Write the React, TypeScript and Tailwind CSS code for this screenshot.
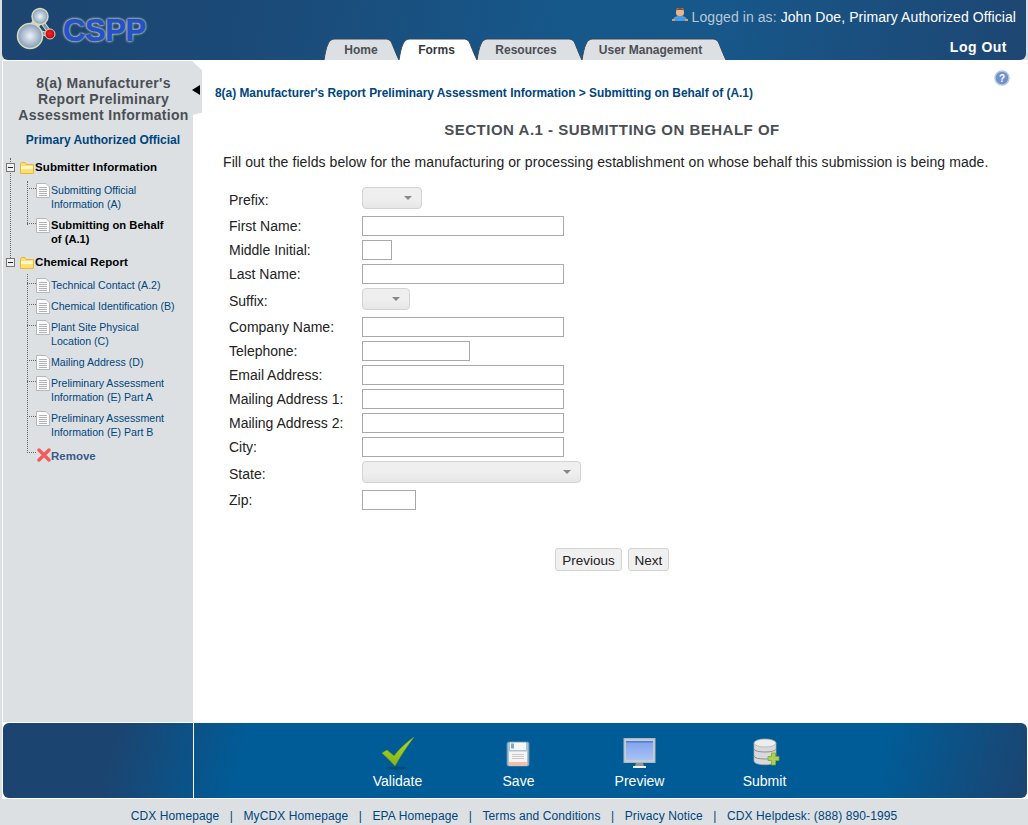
import React from "react";

const FONT = "font-['Liberation_Sans',Arial,sans-serif]";

function Tab({ w, label, active, pad }: { w: number; label: string; active?: boolean; pad: string }) {
  const d = `M0 22 C1 16 2 10 4 6 C6 2 8 1 12 1 L${w - 14} 1 C${w - 9} 1 ${w - 8} 3 ${w - 6} 8 C${w - 4} 13 ${w - 2} 18 ${w} 22`;
  return (
    <div className={`relative h-[22px] flex items-center justify-center ${pad}`} style={{ width: w }}>
      <svg className="absolute inset-0" width={w} height={22}>
        <path d={d} fill={active ? "#ffffff" : "#dce0e3"} stroke="#33465c" strokeWidth="1" />
      </svg>
      <span className={`relative text-[12px] font-bold pt-[1px] ${active ? "text-[#333a40]" : "text-[#4a4f55]"}`}>{label}</span>
    </div>
  );
}

function Logo() {
  return (
    <div className="flex items-center">
      <svg width="46" height="44" viewBox="0 0 46 44" className="shrink-0">
        <defs>
          <radialGradient id="ball" cx="50%" cy="50%" r="55%">
            <stop offset="0%" stopColor="#eef2f6" />
            <stop offset="65%" stopColor="#a3b5cb" />
            <stop offset="100%" stopColor="#7a90b0" />
          </radialGradient>
          <radialGradient id="red" cx="45%" cy="45%" r="55%">
            <stop offset="0%" stopColor="#f02828" />
            <stop offset="100%" stopColor="#c00010" />
          </radialGradient>
        </defs>
        <path d="M14 26 L24 10" stroke="#d8dcb8" strokeWidth="9" />
        <path d="M14 26 L24 10" stroke="#b9c8d8" strokeWidth="6.5" />
        <path d="M24 12 L34 26 M18 24 L34 28" stroke="#d8dcb8" strokeWidth="4.5" />
        <path d="M24 12 L34 26 M18 24 L34 28" stroke="#7d94b2" strokeWidth="2.5" />
        <circle cx="24" cy="9.5" r="8" fill="url(#ball)" stroke="#d8dcb8" strokeWidth="1.5" />
        <circle cx="14" cy="29" r="12.5" fill="url(#ball)" stroke="#d8dcb8" strokeWidth="1.5" />
        <circle cx="34" cy="27" r="5" fill="url(#red)" stroke="#d8dcb8" strokeWidth="1" />
      </svg>
      <span className="ml-[1px] mt-[3px] text-[31px] leading-none font-bold tracking-[-0.4px] text-[#2450c8] [-webkit-text-stroke:0.6px_#2450c8] [text-shadow:0_0_2px_#e2e2b4,0_0_2px_#e2e2b4,0_0_3px_#e2e2b4]">
        CSPP
      </span>
    </div>
  );
}

function Header() {
  return (
    <div className="relative mx-[2px] h-[60px] shrink-0 rounded-b-[6px] bg-[linear-gradient(100deg,#1d4570_0%,#1b4a78_25%,#16588a_55%,#17578a_70%,#1e4672_100%)] flex">
      <div className="pl-[14px] pt-[7px] w-[322px]">
        <Logo />
      </div>
      <div className="flex items-end">
        <Tab w={75} label="Home" pad="pr-[1px]" />
        <Tab w={78} label="Forms" active pad="pr-[3px]" />
        <Tab w={105} label="Resources" pad="pr-[7px]" />
        <Tab w={144} label="User Management" pad="pr-[7px]" />
      </div>
      <div className="absolute right-[10px] top-[8px] flex items-center text-[14px] leading-[18px] tracking-[0.08px]">
        <svg width="16" height="15" viewBox="0 0 16 15" className="mr-[4px] -mt-[5px]">
          <rect x="4" y="1" width="8" height="8" rx="3" fill="#e8b48c" />
          <path d="M4 4 C4 0 12 0 12 4 L11 3 L5 3 Z" fill="#8a4a20" />
          <path d="M1 13 C2 9 5 9 8 9 C11 9 14 9 15 13 L12 14 L4 14 Z" fill="#4a9ce8" />
          <rect x="0" y="12" width="3" height="2" fill="#e89850" />
          <rect x="13" y="12" width="3" height="2" fill="#e89850" />
        </svg>
        <span className="text-[#b9c7d6]">Logged in as:&nbsp;</span>
        <span className="text-white">John Doe, Primary Authorized Official</span>
      </div>
      <div className="absolute right-[19px] top-[38px] text-[14px] leading-[18px] font-bold text-white tracking-[0.5px]">Log Out</div>
    </div>
  );
}

function Folder() {
  return (
    <svg width="14" height="12" viewBox="0 0 14 12" className="shrink-0">
      <path d="M0.5 2 L0.5 11.5 L13.5 11.5 L13.5 2.5 L6 2.5 L5 0.5 L1.5 0.5 Z" fill="#ffdf70" stroke="#e8b830" />
      <rect x="1" y="4" width="12" height="3" fill="#fff6cc" />
    </svg>
  );
}

function Minus() {
  return (
    <svg width="10" height="10" viewBox="0 0 10 10" className="shrink-0">
      <rect x="0.5" y="0.5" width="8" height="8" fill="#eef0f2" stroke="#777" />
      <path d="M2 4.5 H7" stroke="#222" />
    </svg>
  );
}

function Doc() {
  return (
    <svg width="14" height="15" viewBox="0 0 14 15" className="shrink-0 -mb-[1px]">
      <path d="M0.5 0.5 H10 L13.5 4 V14.5 H0.5 Z" fill="#fbfbfb" stroke="#b5b8ba" />
      <path d="M3 4.5 H11 M3 6.5 H11 M3 8.5 H11 M3 10.5 H11 M3 12.5 H11" stroke="#b0b3b5" />
    </svg>
  );
}

function TreeHead({ label }: { label: string }) {
  return (
    <div className="relative flex items-center h-[14px] pl-[6px] text-[11.5px] font-bold text-black tracking-[0.1px]">
      <Minus />
      <span className="w-[4px]" />
      <Folder />
      <span className="ml-[1px] whitespace-nowrap">{label}</span>
    </div>
  );
}

function TreeItem({ lines, current, mb = 7 }: { lines: string[]; current?: boolean; mb?: number }) {
  return (
    <div className="relative flex pl-[36px]" style={{ marginBottom: mb }}>
      <span className="absolute left-[27px] top-[5px] w-[9px] border-t border-dotted border-[#666]" />
      <Doc />
      <div className={`ml-[1px] leading-[14px] whitespace-nowrap ${current ? "text-[11.2px] font-bold text-black" : "text-[10.6px] text-[#00457c]"}`}>
        {lines.map((l) => (
          <div key={l}>{l}</div>
        ))}
      </div>
    </div>
  );
}

function Sidebar() {
  return (
    <div className="relative z-10 w-[190px] ml-[1px] shrink-0 bg-[#dce0e3] border-t border-white">
      <div className="absolute left-[189px] top-0 h-[54px] w-[10px] bg-[#dce0e3] [clip-path:polygon(0_0,100%_17%,100%_96%,0_100%)]" />
      <div className="absolute left-[189px] top-[24px] w-0 h-0 border-y-[5px] border-y-transparent border-r-[8px] border-r-black" />
      <div className="pt-[14px] pl-[11px] text-center text-[14px] leading-[16px] font-bold text-[#4a4f55] tracking-[0.32px]">
        <div>8(a) Manufacturer's</div>
        <div>Report Preliminary</div>
        <div className="whitespace-nowrap">Assessment Information</div>
      </div>
      <div className="mt-[9px] pl-[10px] text-center text-[12px] leading-[16px] font-bold text-[#00457c] whitespace-nowrap">Primary Authorized Official</div>

      <div className="relative mt-[13px] -ml-[3px]">
        <span className="absolute left-[10px] top-[-3px] h-[100px] border-l border-dotted border-[#666]" />
        <span className="absolute left-[27px] top-[20px] h-[44px] border-l border-dotted border-[#666]" />
        <span className="absolute left-[27px] top-[113px] h-[179px] border-l border-dotted border-[#666]" />
        <TreeHead label="Submitter Information" />
        <div className="mt-[8px]">
          <TreeItem lines={["Submitting Official", "Information (A)"]} />
          <TreeItem current lines={["Submitting on Behalf", "of (A.1)"]} mb={10} />
        </div>
        <TreeHead label="Chemical Report" />
        <div className="mt-[8px]">
          <TreeItem lines={["Technical Contact (A.2)"]} />
          <TreeItem lines={["Chemical Identification (B)"]} />
          <TreeItem lines={["Plant Site Physical", "Location (C)"]} />
          <TreeItem lines={["Mailing Address (D)"]} />
          <TreeItem lines={["Preliminary Assessment", "Information (E) Part A"]} />
          <TreeItem lines={["Preliminary Assessment", "Information (E) Part B"]} mb={10} />
          <div className="relative flex items-center pl-[36px] h-[16px]">
            <span className="absolute left-[27px] top-[3px] w-[9px] border-t border-dotted border-[#666]" />
            <svg width="14" height="14" viewBox="0 0 14 14" className="shrink-0 -mt-[5px] ml-[1px]">
              <path d="M2 2 L12 12 M12 2 L2 12" stroke="#f25c5c" strokeWidth="3.4" strokeLinecap="round" />
            </svg>
            <span className="text-[11.5px] font-bold text-[#3a5a8c]">Remove</span>
          </div>
        </div>
      </div>
    </div>
  );
}

function Input({ w }: { w: number }) {
  return <div className="h-[20px] border border-[#a9a9a9] bg-white" style={{ width: w }} />;
}

function Select({ w }: { w: number }) {
  return (
    <div
      className="relative h-[22px] rounded-[4px] border border-[#d3d3d3] bg-[linear-gradient(#efefef,#efefef_50%,#e6e6e6)]"
      style={{ width: w }}
    >
      <span className="absolute right-[9px] top-[8px] w-0 h-0 border-x-[4px] border-x-transparent border-t-[4px] border-t-[#888]" />
    </div>
  );
}

function Row({ label, children, select }: { label: string; children: React.ReactNode; select?: boolean }) {
  return (
    <div className={`flex items-center ${select ? "mb-[7px]" : "mb-[4px]"}`}>
      <div className={`w-[133px] text-[14px] leading-[16px] text-[#222] whitespace-nowrap ${select ? "pt-[4px]" : ""}`}>{label}</div>
      {children}
    </div>
  );
}

function Button({ label, w }: { label: string; w: number }) {
  return (
    <div
      className="h-[23px] rounded-[3px] border border-[#d3d3d3] bg-[#f0f0f0] flex items-center justify-center pt-[3px] text-[13.5px] leading-[16px] text-[#222]"
      style={{ width: w }}
    >
      {label}
    </div>
  );
}

function Content() {
  return (
    <div className="relative flex-1 bg-white">
      <svg width="16" height="16" viewBox="0 0 16 16" className="absolute left-[801px] top-[10px]">
        <circle cx="8" cy="8" r="7" fill="#6f93c9" stroke="#b5c8e2" strokeWidth="1.5" />
        <text x="8" y="12" textAnchor="middle" fontSize="10" fontWeight="bold" fill="#fff" fontFamily="Liberation Sans">?</text>
      </svg>
      <div className="pl-[22px] pt-[26px] text-[11.9px] leading-[14px] font-bold text-[#00457c] whitespace-nowrap">
        8(a) Manufacturer's Report Preliminary Assessment Information &gt; Submitting on Behalf of (A.1)
      </div>
      <div className="mt-[21px] text-center pl-[3px] text-[15px] leading-[18px] font-bold text-[#4a4f55] tracking-[0.5px]">
        SECTION A.1 - SUBMITTING ON BEHALF OF
      </div>
      <div className="mt-[14px] pl-[30px] text-[14px] leading-[18px] text-[#222] tracking-[0.074px] whitespace-nowrap">
        Fill out the fields below for the manufacturing or processing establishment on whose behalf this submission is being made.
      </div>
      <div className="mt-[16px] pl-[36px]">
        <Row label="Prefix:" select><Select w={60} /></Row>
        <Row label="First Name:"><Input w={202} /></Row>
        <Row label="Middle Initial:"><Input w={30} /></Row>
        <Row label="Last Name:"><Input w={202} /></Row>
        <Row label="Suffix:" select><Select w={48} /></Row>
        <Row label="Company Name:"><Input w={202} /></Row>
        <Row label="Telephone:"><Input w={108} /></Row>
        <Row label="Email Address:"><Input w={202} /></Row>
        <Row label="Mailing Address 1:"><Input w={202} /></Row>
        <Row label="Mailing Address 2:"><Input w={202} /></Row>
        <Row label="City:"><Input w={202} /></Row>
        <Row label="State:" select><Select w={219} /></Row>
        <Row label="Zip:"><Input w={54} /></Row>
      </div>
      <div className="mt-[38px] ml-[362px] flex gap-[6px]">
        <Button label="Previous" w={67} />
        <Button label="Next" w={41} />
      </div>
    </div>
  );
}

function ToolItem({ label, w, icon }: { label: string; w: number; icon: React.ReactNode }) {
  return (
    <div className="flex flex-col items-center" style={{ width: w }}>
      <div className="h-[34px] flex items-end justify-center">{icon}</div>
      <div className="mt-[3px] text-[14px] leading-[16px] text-white">{label}</div>
    </div>
  );
}

function Toolbar() {
  return (
    <div className="ml-[2px] pl-[1px] pr-[1px] pb-[1px] h-[76px] shrink-0 bg-white">
      <div className="h-[75px] rounded-[6px] bg-[linear-gradient(105deg,#1c4470_0%,#1c4470_11%,#005c97_24%,#005c97_85%,#1c4470_100%)] flex">
        <div className="w-[191px] border-r border-white shrink-0" />
        <div className="flex pl-[143px] pt-[13px]">
          <ToolItem label="Validate" w={121} icon={
            <svg width="34" height="33" viewBox="0 0 34 33">
              <defs>
                <linearGradient id="chk" x1="0" y1="0" x2="0" y2="1">
                  <stop offset="0%" stopColor="#b4dc28" />
                  <stop offset="100%" stopColor="#86b214" />
                </linearGradient>
              </defs>
              <ellipse cx="16" cy="31" rx="10" ry="1.5" fill="#004a78" />
              <path d="M1 16 L6 13 L13 19 C19 11 26 5 33 0 C27 8 20 18 14 29 C10 24 5 20 1 16 Z" fill="url(#chk)" stroke="#7ba314" strokeWidth="0.5" />
            </svg>
          } />
          <ToolItem label="Save" w={121} icon={
            <svg width="24" height="26" viewBox="0 0 24 26" className="mb-[3px] mr-[1px]">
              <rect x="1" y="1" width="22" height="24" rx="1.5" fill="#a9c4d8" stroke="#5f87a8" />
              <rect x="4" y="1.5" width="16" height="7.5" fill="#f4f6f8" />
              <rect x="5" y="2.5" width="3" height="5" fill="#8aa4ba" />
              <rect x="3" y="10.5" width="18" height="14" fill="#f5f5f5" />
              <path d="M6 13.5 H18 M6 15.5 H18 M6 17.5 H18" stroke="#c9c9c9" />
              <rect x="3" y="21" width="18" height="3.5" fill="#f4c0a2" />
            </svg>
          } />
          <ToolItem label="Preview" w={121} icon={
            <svg width="33" height="32" viewBox="0 0 33 32">
              <defs>
                <linearGradient id="scr" x1="0" y1="0" x2="0" y2="1">
                  <stop offset="0%" stopColor="#7ea3ee" />
                  <stop offset="100%" stopColor="#a8c2f4" />
                </linearGradient>
              </defs>
              <rect x="1" y="0.5" width="31" height="24" fill="#c4ccd4" stroke="#aeb6be" />
              <rect x="3" y="3" width="27" height="19" fill="url(#scr)" />
              <rect x="3" y="3" width="27" height="1.5" fill="#4f7cd8" />
              <path d="M13 25 H20 L21 28 H12 Z" fill="#8f969c" />
              <rect x="10" y="28" width="13" height="2" fill="#f2f2f2" />
            </svg>
          } />
          <ToolItem label="Submit" w={129} icon={
            <svg width="27" height="29" viewBox="0 0 27 29" className="mb-[3px] ml-[3px]">
              <path d="M1 5 V23 C1 28 23 28 23 23 V5 Z" fill="#d7d9da" stroke="#a9adb0" strokeWidth="0.7" />
              <ellipse cx="12" cy="5" rx="11" ry="4" fill="#eceded" stroke="#a9adb0" strokeWidth="0.7" />
              <path d="M1 11 C1 15 23 15 23 11 M1 18 C1 22 23 22 23 18" fill="none" stroke="#8d9194" />
              <path d="M15 18.5 H18.5 V15 H22.5 V18.5 H26 V22.5 H22.5 V27 H18.5 V22.5 H15 Z" fill="#a8d254" stroke="#7ba32c" strokeWidth="0.8" />
            </svg>
          } />
        </div>
      </div>
    </div>
  );
}

function FooterLinks() {
  const links = ["CDX Homepage", "MyCDX Homepage", "EPA Homepage", "Terms and Conditions", "Privacy Notice", "CDX Helpdesk: (888) 890-1995"];
  return (
    <div className="h-[26px] shrink-0 flex items-center justify-center text-[12px] text-[#00457c] pt-[8px] whitespace-nowrap tracking-[0.1px]">
      {links.map((l, i) => (
        <React.Fragment key={l}>
          {i > 0 && <span className="mx-[10.5px]">|</span>}
          <span>{l}</span>
        </React.Fragment>
      ))}
    </div>
  );
}

export default function App() {
  return (
    <div className={`${FONT} w-[1028px] h-[825px] bg-[#dce0e3] flex flex-col overflow-hidden relative`}>
      <Header />
      <div className="h-[663px] shrink-0 ml-[2px] pb-[1px] flex bg-white">
        <Sidebar />
        <Content />
      </div>
      <Toolbar />
      <FooterLinks />
    </div>
  );
}
